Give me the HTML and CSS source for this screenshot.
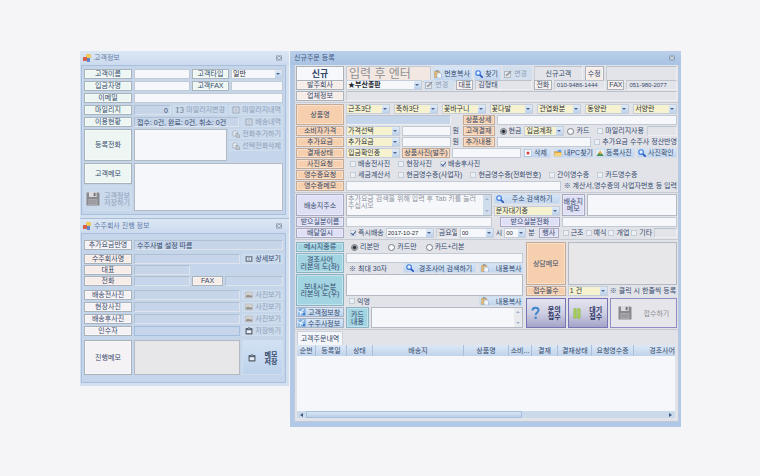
FILE: index.html
```html
<!DOCTYPE html>
<html lang="ko">
<head>
<meta charset="utf-8">
<title>신규주문 등록</title>
<meta name="viewport" content="width=device-width, initial-scale=1">
<link rel="stylesheet" href="styles.css">
</head>
<body>
<svg class="sprite" aria-hidden="true">
  <symbol id="app" viewBox="0 0 8 8"><rect x="3" y="0" width="5" height="4" fill="#f0c860"/><rect x="0" y="3" width="4" height="4" fill="#d8604a"/><rect x="4" y="4" width="3" height="4" fill="#5f86cc"/></symbol>
  <symbol id="close" viewBox="0 0 7 6"><rect width="7" height="6" fill="#94a2b6"/><path d="M1.2 1l4.6 4M5.8 1L1.2 5" stroke="#eef3f9" stroke-width=".9"/></symbol>
  <symbol id="find" viewBox="0 0 8 8"><path d="M4.8 4.8L7.2 7.2" stroke="#2a58b8" stroke-width="1.7" stroke-linecap="round"/><circle cx="3.1" cy="3.1" r="2.3" fill="#e2f1ff" stroke="#3c78dc" stroke-width="1.1"/></symbol>
  <symbol id="paste" viewBox="0 0 8 8"><rect x=".6" y="1" width="5" height="6.6" rx=".5" fill="#e9bc72" stroke="#b99358" stroke-width=".5"/><rect x="2" y=".2" width="2.3" height="1.6" fill="#8b98aa"/><path d="M3 3h3l1.6 1.5V8H3z" fill="#f2f6fb" stroke="#7f96b8" stroke-width=".5"/></symbol>
  <symbol id="edit" viewBox="0 0 8 8"><rect x=".5" y="1.5" width="6" height="6" fill="#e6e8ec" stroke="#a9b0b9" stroke-width=".8"/><path d="M2.5 5.8L7 .9" stroke="#9198a2" stroke-width="1.5"/><path d="M1.8 4.2l1 1.8" stroke="#9198a2"/></symbol>
  <symbol id="disk" viewBox="0 0 14 14"><path d="M.5.5h12l1 1v12H.5z" fill="#8a8a8e"/><rect x="3" y="0" width="7.6" height="5" fill="#dcdce0"/><rect x="7.6" y=".8" width="2" height="3.4" fill="#77777b"/><rect x="2.4" y="7" width="9" height="6" fill="#a9a9ad"/><path d="M3.4 9h7M3.4 11h7" stroke="#8b8b8f" stroke-width=".8"/></symbol>
  <symbol id="save" viewBox="0 0 8 8"><rect x=".5" y="1" width="7" height="6.4" rx=".7" fill="#59626f"/><rect x="1.7" y="3.2" width="4.6" height="3" fill="#e7edf4"/><rect x="3" y="0" width="2" height="2.2" fill="#8792a1"/></symbol>
  <symbol id="list" viewBox="0 0 8 8"><rect x="1" y="1" width="6" height="6" fill="#dfe5ee" stroke="#8e9bae" stroke-width=".8"/><path d="M2.4 3h3.2M2.4 5h3.2" stroke="#8e9bae" stroke-width=".7"/></symbol>
  <symbol id="swap" viewBox="0 0 8 8"><path d="M0 2h3M0 6h3M1.5 1v6M4 1.5h3v5H4M5.5 4h2" fill="none" stroke="#8995a8" stroke-width=".9"/></symbol>
  <symbol id="detail" viewBox="0 0 8 8"><rect x=".5" y="1" width="7" height="6" rx=".5" fill="#7d8896"/><rect x="2" y="2.5" width="4" height="3" fill="#dfe7f0"/><path d="M4 2.5v3" stroke="#7d8896" stroke-width=".8"/></symbol>
  <symbol id="photo" viewBox="0 0 8 8"><rect x=".4" y="1" width="7.2" height="6" fill="#d4d3d0" stroke="#b2b5b9" stroke-width=".5"/><path d="M1 6.3V5l2-1.6 1.7 1.3L6 4l1.1 1v1.3z" fill="#918f8c"/></symbol>
  <symbol id="phone" viewBox="0 0 8 8"><path d="M1 1.5l3-1 1 1V6H1z" fill="#eceef0" stroke="#9da6b2" stroke-width=".7"/><path d="M3.5 3.5H6l1.5 2V8h-3z" fill="#c1c7cf" stroke="#929cab" stroke-width=".6"/></symbol>
  <symbol id="del" viewBox="0 0 8 8"><rect x=".5" y=".8" width="7" height="6.6" fill="#f7f9fc" stroke="#a0b3cc" stroke-width=".6"/><path d="M2.8 2.9l2.4 2.4M5.2 2.9L2.8 5.3" stroke="#d93a32" stroke-width="1.3"/></symbol>
  <symbol id="folder" viewBox="0 0 8 8"><path d="M3.6.8h3.8v4H3.6z" fill="#6f9ddc"/><path d="M.3 2.2h2.6l.8.9h3.6v4H.3z" fill="#dda53b"/><path d="M1.2 4H8L6.9 7.4H.3z" fill="#f8d27c"/></symbol>
  <symbol id="picture" viewBox="0 0 8 8"><rect x=".3" y="1" width="7.4" height="6.2" fill="#e6eef2"/><path d="M.5 6.9L3 3.4 4.6 5l1.2-1 1.9 2.9z" fill="#4f8c4d"/><path d="M2.4 4.2L4.2 1.6l1.9 3.2z" fill="#e5a536"/></symbol>
  <symbol id="link" viewBox="0 0 8 8"><rect x=".3" y=".3" width="7.4" height="7.4" fill="#80afe0"/><path d="M0 2.6l2.2 1.7L6 1.2M2 7l1.4-2.7 3 1.5" fill="none" stroke="#e6f2ff" stroke-width="1.1"/><circle cx="6" cy="6" r="1.2" fill="#3f79c8"/></symbol>
  <symbol id="ask" viewBox="0 0 10 14"><path d="M1.6 4.2C1.6 0 8.6.2 8.4 4 8.3 6.5 5.2 6.6 5.2 9.3" fill="none" stroke="#3f86cf" stroke-width="2.2"/><circle cx="5.2" cy="12.2" r="1.4" fill="#3f86cf"/></symbol>
  <symbol id="pause" viewBox="0 0 8 12"><rect x=".5" y=".5" width="2.8" height="11" rx=".6" fill="#a6cf58" stroke="#86b340" stroke-width=".5"/><rect x="4.7" y=".5" width="2.8" height="11" rx=".6" fill="#a6cf58" stroke="#86b340" stroke-width=".5"/></symbol>
</svg>

<main class="desk">
  <div class="side">
    <section class="win">
      <header class="bar"><svg class="ico"><use href="#app"/></svg><h2>고객정보</h2><button class="x" aria-label="닫기"><svg><use href="#close"/></svg></button></header>
      <form class="pane customer">
        <div class="row c-name"><label class="lab mint" for="cname">고객이름</label><input id="cname"><label class="lab mint" for="ctype">고객타입</label><span class="sel"><select id="ctype"><option>일반</option></select></span></div>
        <div class="row c-name"><label class="lab mint" for="payer">입금자명</label><input id="payer"><label class="lab mint" for="cfax">고객FAX</label><input id="cfax"></div>
        <div class="row c-one"><label class="lab mint" for="mail">이메일</label><input id="mail"></div>
        <div class="row c-mile"><label class="lab mint" for="mile">마일리지</label><input id="mile" class="flat right" value="0" readonly><button type="button" class="btn" disabled><svg class="ico"><use href="#swap"/></svg>마일리지변경</button><button type="button" class="btn" disabled><svg class="ico"><use href="#list"/></svg>마일리지내역</button></div>
        <div class="row c-use"><label class="lab mint" for="usage">이용현황</label><input id="usage" class="flat" value="접수: 0건, 완료: 0건, 취소: 0건" readonly><button type="button" class="btn" disabled><svg class="ico"><use href="#list"/></svg>배송내역</button></div>
        <div class="row c-tel"><label class="lab mint" for="tels">등록전화</label><textarea id="tels"></textarea><div class="stack"><button type="button" class="btn" disabled><svg class="ico"><use href="#phone"/></svg>전화추가하기</button><button type="button" class="btn" disabled><svg class="ico"><use href="#phone"/></svg>선택전화삭제</button></div></div>
        <div class="row c-memo"><div class="memo-side"><label class="lab mint" for="cmemo">고객메모</label><button type="button" class="btn tall" disabled><svg class="big"><use href="#disk"/></svg><span>고객정보<br>저장하기</span></button></div><textarea id="cmemo"></textarea></div>
      </form>
    </section>

    <section class="win">
      <header class="bar"><svg class="ico"><use href="#app"/></svg><h2>수주회사 진행 정보</h2><button class="x" aria-label="닫기"><svg><use href="#close"/></svg></button></header>
      <form class="pane vendor">
        <div class="group"><div class="row c-one"><label class="lab pale" for="extra">추가요금반영</label><input id="extra" class="flat" value="수주사별 설정 따름" readonly></div></div>
        <div class="group">
          <div class="row v-act"><label class="lab rose" for="vname">수주회사명</label><input id="vname" class="flat" readonly><button type="button" class="btn"><svg class="ico"><use href="#detail"/></svg>상세보기</button></div>
          <div class="row v-half"><label class="lab rose" for="vceo">대표</label><input id="vceo" class="flat" readonly></div>
          <div class="row v-tel"><label class="lab rose" for="vtel">전화</label><input id="vtel" class="flat" readonly><label class="lab rose" for="vfax">FAX</label><input id="vfax" class="flat" readonly></div>
        </div>
        <div class="group loose">
          <div class="row v-act"><label class="lab pale" for="p1">배송전사진</label><input id="p1" class="flat" readonly><button type="button" class="btn" disabled><svg class="ico"><use href="#photo"/></svg>사진보기</button></div>
          <div class="row v-act"><label class="lab pale" for="p2">현장사진</label><input id="p2" class="flat" readonly><button type="button" class="btn" disabled><svg class="ico"><use href="#photo"/></svg>사진보기</button></div>
          <div class="row v-act"><label class="lab pale" for="p3">배송후사진</label><input id="p3" class="flat" readonly><button type="button" class="btn" disabled><svg class="ico"><use href="#photo"/></svg>사진보기</button></div>
          <div class="row v-act"><label class="lab pale" for="taker">인수자</label><input id="taker" class="flat edge"><button type="button" class="btn" disabled><svg class="ico"><use href="#save"/></svg>저장하기</button></div>
        </div>
        <div class="row v-act v-memo"><label class="lab pale" for="vmemo">진행메모</label><textarea id="vmemo" class="gray"></textarea><button type="button" class="btn tall strong"><svg class="ico"><use href="#save"/></svg><span>메모<br>저장</span></button></div>
      </form>
    </section>
  </div>

  <section class="win order">
    <header class="bar"><h1>신규주문 등록</h1><button class="x" aria-label="닫기"><svg><use href="#close"/></svg></button></header>
    <form class="pane">
      <div class="group">
        <div class="row o-new"><label class="lab head" for="tel">신규</label><input id="tel" class="hero" placeholder="입력 후 엔터"><button type="button" class="btn blue"><svg class="ico"><use href="#paste"/></svg>번호복사</button><button type="button" class="btn blue"><svg class="ico"><use href="#find"/></svg>찾기</button><button type="button" class="btn" disabled><svg class="ico"><use href="#edit"/></svg>변경</button><output class="out center">신규고객</output><button type="button" class="lab rose">수정</button><output class="out"></output></div>
        <div class="row o-firm"><label class="lab rose" for="firm">발주회사</label><span class="sel bold"><select id="firm"><option>★부산총판</option></select></span><button type="button" class="btn" disabled><svg class="ico"><use href="#edit"/></svg>변경</button><span class="lab rose">대표</span><output class="out">김형태</output><span class="lab rose">전화</span><output class="out num">010-9486-1444</output><span class="lab rose">FAX</span><output class="out num">051-980-2077</output></div>
        <div class="row o-one"><span class="lab rose">업체정보</span><output class="out"></output></div>
      </div>

      <div class="group lines">
        <div class="row o-one o-goods"><span class="lab peach">상품명</span>
          <div class="lines">
            <div class="kinds"><span class="sel yel"><select aria-label="근조"><option>근조3단</option></select></span><span class="sel yel"><select aria-label="축하"><option>축하3단</option></select></span><span class="sel yel"><select aria-label="꽃바구니"><option>꽃바구니</option></select></span><span class="sel yel"><select aria-label="꽃다발"><option>꽃다발</option></select></span><span class="sel yel"><select aria-label="관엽화분"><option>관엽화분</option></select></span><span class="sel yel"><select aria-label="동양란"><option>동양란</option></select></span><span class="sel yel"><select aria-label="서양란"><option>서양란</option></select></span></div>
            <div class="row o-sub"><output class="out sky"></output><label class="lab peach" for="gdetail">상품상세</label><input id="gdetail"></div>
          </div>
        </div>
        <div class="row o-one"><label class="lab peach" for="price">소비자가격</label><div class="row o-sub"><span class="sel yel"><select aria-label="가격선택"><option>가격선택</option></select></span><input id="price"><span class="txt">원</span><span class="lab peach">고객결재</span><div class="line pay"><label><input type="radio" name="pay" checked>현금</label><span class="sel yel"><select aria-label="입금계좌"><option>입금계좌</option></select></span><label><input type="radio" name="pay">카드</label><label class="gapl"><input type="checkbox">마일리지사용</label><output class="out grow"></output></div></div></div>
        <div class="row o-one"><label class="lab peach" for="fee">추가요금</label><div class="row o-sub"><span class="sel yel"><select aria-label="추가요금"><option>추가요금</option></select></span><input id="fee"><span class="txt">원</span><label class="lab peach" for="feenote">추가내용</label><div class="line"><input id="feenote" class="grow"><label class="wide"><input type="checkbox">추가요금 수주사 정산반영</label></div></div></div>
        <div class="row o-one"><label class="lab peach" for="paystate">결재상태</label><div class="row o-photo"><span class="sel yel"><select id="paystate"><option>입금확인중</option></select></span><label class="lab peach" for="gphoto">상품사진(발주)</label><input id="gphoto"><button type="button" class="btn blue"><svg class="ico"><use href="#del"/></svg>삭제</button><button type="button" class="btn blue"><svg class="ico"><use href="#folder"/></svg>내PC찾기</button><button type="button" class="btn blue"><svg class="ico"><use href="#picture"/></svg>등록사진</button><button type="button" class="btn blue"><svg class="ico"><use href="#find"/></svg>사진확인</button></div></div>
        <div class="row o-one"><span class="lab peach">사진요청</span><div class="line checks"><label><input type="checkbox">배송전사진</label><label><input type="checkbox">현장사진</label><label><input type="checkbox" checked>배송후사진</label></div></div>
        <div class="row o-one"><span class="lab peach">영수증요청</span><div class="line checks"><label><input type="checkbox">세금계산서</label><label><input type="checkbox">현금영수증(사업자)</label><label><input type="checkbox">현금영수증(전화번호)</label><label><input type="checkbox">간이영수증</label><label><input type="checkbox">카드영수증</label></div></div>
        <div class="row o-one"><label class="lab peach" for="rmemo">영수증메모</label><div class="line"><input id="rmemo" class="grow"><span class="txt">※ 계산서,영수증의 사업자번호 등 입력</span></div></div>
      </div>

      <div class="group lines">
        <div class="row o-addr"><label class="lab lilac" for="addr">배송지주소</label><div class="scrolled"><textarea id="addr" placeholder="추가요금 검색을 위해 입력 후 Tab 키를 눌러 주십시오"></textarea><i class="vbar"></i></div><div class="stack"><button type="button" class="btn blue roomy"><svg class="ico"><use href="#find"/></svg>주소 검색하기</button><span class="sel yel"><select aria-label="문자대기중"><option>문자대기중</option></select></span></div><label class="lab lilac" for="amemo">배송지<br>메모</label><textarea id="amemo"></textarea></div>
        <div class="row o-recv"><label class="lab lilac" for="rname">받으실분이름</label><input id="rname"><label class="lab lilac inset" for="rtel">받으실분전화</label><input id="rtel"></div>
        <div class="row o-one"><span class="lab lilac">배달일시</span><div class="line when"><label><input type="checkbox" checked>즉시배송</label><span class="sel num date"><select aria-label="날짜"><option>2017-10-27</option></select></span><span class="out day">금요일</span><span class="sel num hour"><select aria-label="시"><option>00</option></select></span><span>시</span><span class="sel num minute"><select aria-label="분"><option>00</option></select></span><span>분</span><span class="lab lilac event">행사</span><label><input type="checkbox">근조</label><label><input type="checkbox">예식</label><label><input type="checkbox">개업</label><label><input type="checkbox">기타</label><output class="out grow"></output></div></div>
      </div>

      <div class="group o-split">
        <div class="lines">
          <div class="row o-one"><span class="lab aqua">메시지종류</span><div class="line radios"><label><input type="radio" name="msg" checked>리본만</label><label><input type="radio" name="msg">카드만</label><label><input type="radio" name="msg">카드+리본</label></div></div>
          <div class="row o-one phrase"><label class="lab aqua" for="ribbon">경조사어<br>리본의 도(좌)</label><div class="fill"><input id="ribbon"><div class="line tools"><span class="grow">※ 최대 30자</span><button type="button" class="btn blue search"><svg class="ico"><use href="#find"/></svg>경조사어 검색하기</button><button type="button" class="btn blue copy"><svg class="ico"><use href="#paste"/></svg>내용복사</button></div></div></div>
          <div class="row o-one sender"><label class="lab aqua" for="sender">보내시는분<br>리본의 도(우)</label><div class="fill"><textarea id="sender"></textarea><div class="line tools"><label class="grow"><input type="checkbox">익명</label><button type="button" class="btn blue copy"><svg class="ico"><use href="#paste"/></svg>내용복사</button></div></div></div>
          <div class="row o-card"><div class="lines"><button type="button" class="btn blue framed"><svg class="ico"><use href="#link"/></svg>고객정보창</button><button type="button" class="btn blue framed"><svg class="ico"><use href="#link"/></svg>수주사정보</button></div><label class="lab aqua" for="card">카드<br>내용</label><div class="scrolled"><textarea id="card"></textarea><i class="vbar plain"></i></div></div>
        </div>
        <div class="lines right-col">
          <div class="row o-talk"><label class="lab peach" for="talk">상담메모</label><textarea id="talk" class="gray"></textarea></div>
          <div class="row o-count"><label class="lab peach" for="count">접수물수</label><span class="sel yel"><select id="count"><option>1 건</option></select></span><span class="txt">※ 클릭 시 한줄씩 등록</span></div>
          <div class="row o-acts"><button type="button" class="act"><svg class="q"><use href="#ask"/></svg><span>문의<br>접수</span></button><button type="button" class="act"><svg class="p"><use href="#pause"/></svg><span>대기<br>접수</span></button><button type="button" class="act off" disabled><svg class="big"><use href="#disk"/></svg><span>접수하기</span></button></div>
        </div>
      </div>

      <div class="history">
        <button type="button" class="tab">고객주문내역</button>
        <div class="grid">
          <table>
            <colgroup><col class="k1"><col class="k2"><col class="k3"><col class="k4"><col class="k5"><col class="k6"><col class="k7"><col class="k8"><col class="k9"><col class="k10"></colgroup>
            <thead><tr><th>순번</th><th>등록일</th><th>상태</th><th>배송지</th><th>상품명</th><th>소비...</th><th>결재</th><th>결재상태</th><th>요청영수증</th><th class="cut">경조사어</th></tr></thead>
            <tbody><tr><td colspan="10"></td></tr></tbody>
          </table>
          <div class="hbar"><i class="thumb"></i></div>
        </div>
      </div>
    </form>
  </section>
</main>
</body>
</html>
```
FILE: styles.css
```css
* { box-sizing: border-box; }

body {
  margin: 0;
  padding: 51px 79px 48px 80px;
  background: #f5f5f8;
  color: #354a6c;
  font: 7px/8px "Liberation Sans", "Noto Sans CJK KR", sans-serif;
}

.sprite { position: absolute; width: 0; height: 0; }

input, select, textarea, button {
  margin: 0;
  padding: 0;
  border: 0;
  border-radius: 0;
  color: inherit;
  font: inherit;
}

h1, h2 { margin: 0; font-size: 7px; font-weight: 400; flex: 1; }

.desk {
  display: grid;
  grid-template-columns: 209fr 391fr;
  gap: 1px;
  align-items: start;
}

.side { display: grid; gap: 1px; background: #a9bdd6; }

/* windows */
.win { background: #d3e0f0; padding: 0 3px 3px 1px; min-width: 0; }
.bar {
  display: flex;
  align-items: center;
  gap: 3px;
  height: 14px;
  padding: 0 3px 0 2px;
  color: #5f7ba6;
}
.side .bar { background: linear-gradient(#dce7f4, #cbdaed); margin: 0 -3px 0 -1px; padding: 0 7px 0 3px; }
.x { background: none; display: flex; }
.x svg { width: 6px; height: 6px; }
.ico { width: 8px; height: 8px; flex: none; }
.big { width: 14px; height: 14px; flex: none; }

.pane { background: #c6d6ea; border: 1px solid #a9bfdd; }
.side .pane { padding: 3px 2px; }
.customer.pane { display: grid; gap: 2px; }
.side .vendor.pane { display: grid; gap: 4px; padding: 6px 2px 7px; }

.row { display: grid; gap: 2px; min-height: 10px; min-width: 0; }
.row > *, .line > * { min-width: 0; }
.c-name { grid-template-columns: 48px 57fr 37px 53fr; }
.c-one { grid-template-columns: 48px 1fr; }
.c-mile { grid-template-columns: 48px 40fr 54px 54px; }
.c-use { grid-template-columns: 48px 1fr 42px; }
.c-tel { grid-template-columns: 48px 1fr 54px; min-height: 32px; }
.c-memo { grid-template-columns: 48px 1fr; min-height: 48px; }
.c-tel .stack { align-content: start; grid-auto-rows: 10px; }
.memo-side { display: grid; grid-template-rows: 21px 1fr; gap: 2px; }
.v-act { grid-template-columns: 48px 1fr 41px; }
.v-half { grid-template-columns: 48px 57fr 92fr; }
.v-tel { grid-template-columns: 48px 57fr 31px 59fr; }
.v-memo { min-height: 35px; }
.vendor .group { display: grid; gap: 1px; }
.vendor .loose { gap: 2px; }
.stack { display: grid; gap: 2px; }

/* captions */
.lab {
  display: flex;
  align-items: center;
  justify-content: center;
  text-align: center;
  white-space: nowrap;
  overflow: hidden;
  border: 1px solid #aab2ba;
  box-shadow: inset 0 0 0 1px rgba(255, 255, 255, .35);
}
.mint { background: #edf6f3; }
.pale { background: #f5f2f5; }
.rose { background: #f6ece8; }
.peach { background: #f6d0ae; border-color: #c5ab95; }
.lilac { background: #dfdff5; border-color: #a9a9c4; }
.aqua { background: #a3d4e2; border-color: #8ab4c4; }
.head { background: #f7f8fc; font-size: 9px; font-weight: 700; }

/* fields */
input, textarea {
  width: 100%;
  background: #f6f7fa;
  border: 1px solid #c2cad6;
  padding: 0 2px;
  display: block;
  outline: none;
}
input { height: 100%; }
textarea { resize: none; height: 100%; border-color: #b4bac3; overflow: hidden; }
.flat, .out { background: #c6d5e9; border: 1px solid; border-color: #b1bfd2 #dfe4eb #dfe4eb #b1bfd2; }
.edge { border-color: #a3bde0; }
.right { text-align: right; }
.gray { background: #e7e7ea; }
.out { display: flex; align-items: center; padding: 0 2px; overflow: hidden; white-space: nowrap; }
.order .out { background: #e3e4e9; border-color: #bcc2cc #eeeff2 #eeeff2 #c9ced6; }
.order .sky { background: #c5d5ea; }
.center { justify-content: center; }
.num { font-size: 6px; }

.sel { position: relative; display: flex; background: #f6f7fa; border: 1px solid #c5ced9; color: #2f3238; }
.sel select { appearance: none; width: 100%; background: none; padding: 0 7px 0 1px; outline: none; }
.sel::before { content: ""; position: absolute; right: 0; top: 0; bottom: 0; width: 7px; background: linear-gradient(#dfeaf7, #bdd2ec); pointer-events: none; }
.sel::after { content: ""; position: absolute; right: 2px; top: 3px; border: 2px solid transparent; border-top-color: #4d6790; border-bottom: 0; pointer-events: none; }
.yel { background: #f6f2cf; }
.bold { font-weight: 700; color: #22252b; }

.btn {
  display: flex;
  align-items: center;
  gap: 2px;
  padding: 0 1px;
  background: #cad9ec;
  box-shadow: inset 0 0 0 1px #d1deee;
  white-space: nowrap;
  overflow: hidden;
  min-width: 0;
}
.btn:disabled { color: #8f9fb8; }
.side .btn:not(.tall) { justify-content: flex-end; padding: 0 2px; }
.blue { background: linear-gradient(#d9e7f7, #bed3ed); }
.roomy { padding: 0 2px; gap: 8px; }
.tall { justify-content: center; gap: 4px; line-height: 7px; padding: 0; }
.strong { gap: 9px; background: linear-gradient(#d3e2f4, #bcd2ec); font-weight: 700; }
.framed { border: 1px solid #a5b3c8; box-shadow: none; }
.order .btn:disabled { background: #d4dfed; }

input[type=checkbox], input[type=radio] {
  appearance: none;
  flex: none;
  width: 6px;
  height: 6px;
  padding: 0;
  position: relative;
  background: #eceff3;
  border: 1px solid #c3ccd9;
}
input[type=radio] { width: 7px; height: 7px; border-radius: 50%; border-color: #777d86; background: #fafafc; }
input[type=radio]:checked { background: radial-gradient(circle, #2b2f38 0 1px, #8d929b 2px, #fafafc 3px); }
input[type=checkbox]:checked::after {
  content: "";
  position: absolute;
  left: 1px;
  top: -1px;
  width: 2px;
  height: 4px;
  border: solid #3e5f9c;
  border-width: 0 1px 1px 0;
  transform: rotate(40deg);
}

/* order window */
.order { background: #b1c9e7; padding: 0 2px 5px 4px; }
.order .bar { background: linear-gradient(#b9cfea, #a9c3e4); margin: 0 -2px 0 -4px; padding: 0 6px 0 4px; color: #3f587f; }
.order .pane { background: #e2e3e9; border-color: #bcc9dc; border-top-width: 0; padding: 1px 0 3px; }
.order .group { padding: 1px; border-bottom: 1px solid #c5cad3; }
.order .group:first-child { display: grid; gap: 1px; padding-top: 0; }
.lines { display: grid; gap: 1px; min-width: 0; }

.o-new { grid-template-columns: 48px 86fr 39px 27px 29px 49fr 19px 72fr; height: 12px; margin-bottom: 1px; }
.o-firm { grid-template-columns: 48px 77fr 30px 17px 57fr 18px 52fr 17px 51fr; }
.o-one { grid-template-columns: 48px 1fr; }
.o-sub { grid-template-columns: 54px 49fr 8px 32px 182fr; }
.o-sub .sky { grid-column: 1 / 3; }
.o-sub .sky + .lab { grid-column: 4; }
.o-photo { grid-template-columns: 54px 48px 1fr 28px 40px 40px 40px; }
.o-addr { grid-template-columns: 48px 147fr 66px 23px 91fr; min-height: 22px; line-height: 7px; }
.o-recv { grid-template-columns: 48px 147fr 66px 116fr; }
.o-card { grid-template-columns: 48px 23px 1fr; line-height: 7px; }
.o-talk { grid-template-columns: 40px 1fr; min-height: 43px; }
.o-count { grid-template-columns: 40px 40px 1fr; }
.o-acts { grid-template-columns: 40px 40px 1fr; height: 30px; margin-top: 1px; }
.order .o-split { display: grid; grid-template-columns: 228fr 152fr; gap: 3px; padding-top: 2px; }
.right-col { align-content: start; }

.hero { background: #f2e8e1; font-size: 12px; line-height: 12px; padding: 0 2px; }
.hero::placeholder { color: #8f9095; }
textarea::placeholder { color: #8e949f; }
.kinds { display: grid; grid-template-columns: repeat(7, 1fr); gap: 4px; height: 10px; }
.kinds .sel { min-width: 0; }
.inset { margin-left: 6px; }
.txt { white-space: nowrap; display: flex; align-items: center; }

.line { display: flex; align-items: center; gap: 3px; height: 10px; white-space: nowrap; }
.line label:not(.lab) { display: flex; align-items: center; gap: 2px; flex: none; }
.line .grow, .line label.grow { flex: 1; height: 100%; }
.pay { padding-left: 3px; }
.pay .sel { width: 40px; height: 10px; flex: none; }
.gapl { margin-left: 5px; }
.checks { padding-left: 4px; gap: 8px; }
.radios { padding-left: 5px; gap: 9px; }
.when { padding-left: 4px; gap: 2px; }
.when .sel, .when .day { height: 10px; flex: none; }
.date { width: 48px; }
.day { width: 22px; }
.hour { width: 34px; }
.minute { width: 22px; }
.event { width: 20px; height: 10px; flex: none; margin: 0 2px; }

.phrase, .sender { line-height: 7px; }
.phrase { height: 20px; }
.sender { height: 32px; }
.fill { display: grid; grid-template-rows: 1fr 10px; }
.tools { padding-left: 3px; }
.tools .btn { height: 10px; }
.tools .grow { display: flex; align-items: center; }
.search { width: 73px; gap: 5px; padding: 0 3px; }
.copy { width: 44px; gap: 7px; padding: 0 2px; }

.scrolled { display: grid; grid-template-columns: 1fr 8px; border: 1px solid #b4bac3; }
.scrolled textarea { border: 0; padding: 0 1px; }
.vbar { background: #cfdcec; display: flex; flex-direction: column; justify-content: space-between; align-items: center; padding: 3px 0; }
.vbar.plain { background: #e9eaee; }
.vbar::before, .vbar::after { content: ""; border: 2px solid transparent; }
.vbar::before { border-top: 0; border-bottom-color: #9fb0c8; }
.vbar::after { border-bottom: 0; border-top-color: #9fb0c8; }

.act {
  display: flex;
  align-items: center;
  justify-content: center;
  gap: 8px;
  border: 1px solid #7674b4;
  background: linear-gradient(#e3e3f0, #cfcfe3 50%, #a3a3c8);
  color: #2c3565;
  font-weight: 700;
  line-height: 7px;
}
.act.off { background: #e6e6ea; color: #8c8f98; font-weight: 400; gap: 12px; border-color: #8f8dc4; }
.q { width: 9px; height: 14px; }
.p { width: 8px; height: 11px; }

/* order history */
.history { padding: 1px 3px 0 2px; }
.tab { display: block; width: 46px; height: 14px; background: #f4f5f8; border: 1px solid #cbd2dd; border-bottom: 0; white-space: nowrap; }
.grid { background: #f6f7fa; }
table { width: 100%; border-collapse: collapse; table-layout: fixed; }
th {
  height: 11px;
  padding: 0;
  font-weight: 400;
  background: linear-gradient(#dde8f5, #bfd3eb);
  border-right: 1px solid #a9bfdb;
  white-space: nowrap;
  overflow: hidden;
}
th:last-child { border-right: 0; }
.cut { text-align: right; }
td { height: 55px; padding: 0; }
.k1 { width: 5%; }
.k2 { width: 8%; }
.k3 { width: 7%; }
.k4 { width: 24%; }
.k5 { width: 12%; }
.k6 { width: 6%; }
.k7 { width: 7%; }
.k8 { width: 9%; }
.k9 { width: 11%; }
.k10 { width: 11%; }

.hbar { display: flex; align-items: center; justify-content: space-between; height: 7px; padding: 0 3px; background: #cbdaeb; }
.hbar::before, .hbar::after { content: ""; border: 2px solid transparent; }
.hbar::before { border-left: 0; border-right: 3px solid #3d5780; }
.hbar::after { border-right: 0; border-left: 3px solid #3d5780; }
.thumb { width: 58%; height: 7px; margin: 0 auto 0 3px; background: linear-gradient(#d9e7f6, #bbd0ea); border: 1px solid #a5bfdf; }
```
